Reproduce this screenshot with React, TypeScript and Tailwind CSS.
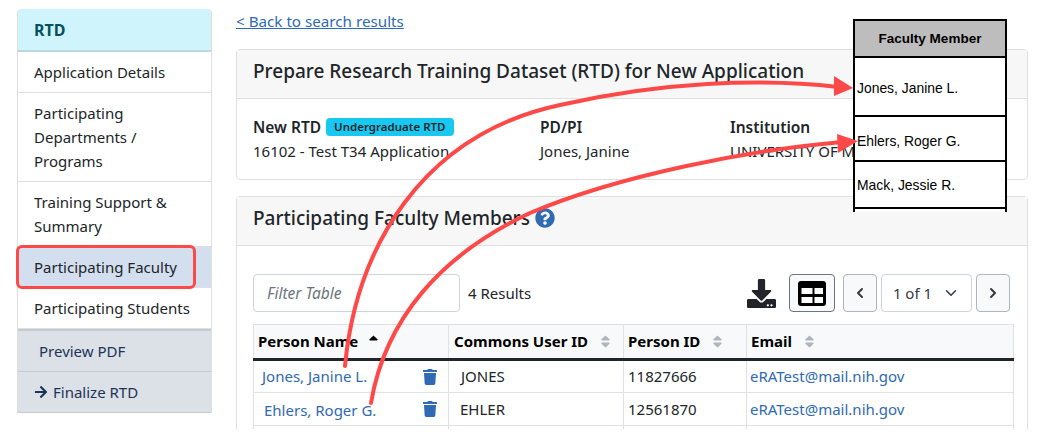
import React from "react";
import { ChevronDown, ChevronLeft, ChevronRight } from "lucide-react";
import { FaTrash, FaArrowRight, FaQuestionCircle, FaSortUp, FaSort, FaDownload } from "react-icons/fa";

const SideItem = ({ children, cls = "" }: { children: React.ReactNode; cls?: string }) => (
  <div className={`border-b border-[#dfdfdf] px-4 py-[7.5px] leading-6 ${cls}`}>{children}</div>
);

const Th = ({ w, children, sort }: { w: string; children: React.ReactNode; sort?: boolean }) => (
  <th className={`${w} border-r border-[#dee2e6] border-b-[3px] border-b-[#212529] text-left font-bold text-black`}>
    <span className="flex items-center gap-[10px]">
      {children}
      {sort && <FaSort className="text-[15px] text-[#adb5bd]" />}
    </span>
  </th>
);

const Row = ({ name, id, pid, nameCls, idCls, cellCls }: { name: string; id: string; pid: string; nameCls: string; idCls: string; cellCls: string }) => (
  <tr className="h-[33px] border-b border-[#dee2e6]">
    <td className="border-r border-l border-[#dee2e6] p-0">
      <div className="flex items-center justify-between pr-[10px] text-[#2f6ab3]">
        <span className={nameCls}>{name}</span>
        <FaTrash className="text-[16px]" />
      </div>
    </td>
    <td className={`border-r border-[#dee2e6] text-[#212529] ${idCls}`}>{id}</td>
    <td className={`border-r border-[#dee2e6] pl-[4px] text-[#212529] ${cellCls}`}>{pid}</td>
    <td className={`border-r border-[#dee2e6] pl-[3px] text-[#2f6ab3] ${cellCls}`}>eRATest@mail.nih.gov</td>
  </tr>
);

export default function App() {
  return (
    <div className="relative h-[437px] w-[1037px] overflow-hidden bg-white text-[15px] text-[#212529] [font-family:'Noto_Sans',sans-serif]">
      <div className="h-[429px] overflow-hidden">
        <div className="flex items-start gap-6 pl-[17px] pt-[9px]">
          <aside className="w-[195px] shrink-0 overflow-hidden rounded-t-[4px] border-x border-[#dfdfdf] text-[#212529]">
            <div className="h-[43px] border-b-2 border-[#b9d8e0] bg-[#cff4fc] px-[16px] pt-[9px] text-[16px] font-bold text-[#055160]">RTD</div>
            <SideItem cls="h-[41px]">Application Details</SideItem>
            <SideItem cls="h-[89px]">Participating Departments / Programs</SideItem>
            <SideItem cls="h-[65px]">Training Support &amp; Summary</SideItem>
            <SideItem cls="h-[41px] bg-[#d3dfee] border-[#c3ccd8]">Participating Faculty</SideItem>
            <SideItem cls="h-[41px]">Participating Students</SideItem>
            <div className="h-[2px] bg-[#c6cad0]" />
            <div className="h-[41px] border-b border-[#c6cad0] bg-[#dce0e7] pl-[21px] pt-[8px] leading-6 text-[#1c3556]">Preview PDF</div>
            <div className="flex h-[41px] items-center gap-[5px] border-b border-[#c6cad0] bg-[#dce0e7] pl-[16px] text-[#1c3556]">
              <FaArrowRight className="text-[14px]" />
              <span>Finalize RTD</span>
            </div>
          </aside>

          <main className="w-[792px] shrink-0">
            <a className="block h-[40px] text-[15.2px] leading-6 text-[#2f6ab3] underline">&lt; Back to search results</a>

            <section className="h-[131px] rounded-[4px] border border-[#dfdfdf]">
              <div className="flex h-[49px] items-center border-b border-[#dfdfdf] bg-[#f7f7f7] px-4 pb-[6px] text-[19px] font-medium">
                Prepare Research Training Dataset (RTD) for New Application
              </div>
              <div className="flex px-4 pt-[16px] leading-[24px]">
                <div className="w-[287px]">
                  <div className="flex items-center gap-[4px] text-[15.5px] font-semibold">
                    New RTD
                    <span className="ml-[1px] rounded-[4px] bg-[#19c8f0] px-2 py-[1px] text-[11.5px] leading-4 font-semibold text-[#212529]">Undergraduate RTD</span>
                  </div>
                  <div>16102 - Test T34 Application</div>
                </div>
                <div className="w-[190px]">
                  <div className="text-[15.5px] font-semibold">PD/PI</div>
                  <div>Jones, Janine</div>
                </div>
                <div>
                  <div className="text-[15.5px] font-semibold">Institution</div>
                  <div className="whitespace-nowrap">UNIVERSITY OF MARYLAND</div>
                </div>
              </div>
            </section>

            <section className="mt-[16px] rounded-[4px] border border-[#dfdfdf]">
              <div className="flex h-[49px] items-center gap-[5px] border-b border-[#dfdfdf] bg-[#f7f7f7] px-4 pb-[6px] text-[19px] font-medium">
                Participating Faculty Members
                <FaQuestionCircle className="text-[20px] text-[#2f6ab3]" />
              </div>
              <div className="px-4 pt-[28px]">
                <div className="flex h-[38px] items-center">
                  <div className="flex h-[38px] w-[207px] items-center rounded-[4px] border border-[#ced4da] pl-[13px] pt-[1px] text-[15.5px] italic text-[#6c757d]">Filter Table</div>
                  <span className="ml-2 pt-[1px]">4 Results</span>
                  <div className="ml-auto flex items-center pr-[1px]">
                    <FaDownload className="mr-[13px] text-[29px] text-[#212529]" />
                    <div className="mr-[8px] flex h-[38px] w-[46px] items-center justify-center rounded-[4px] border border-[#6c757d] bg-[#f8f9fa]">
                      <svg width="28" height="25" viewBox="0 0 28 25">
                        <rect width="28" height="25" rx="3" fill="#000" />
                        <rect x="3.5" y="7" width="11" height="6" fill="#fff" />
                        <rect x="16.5" y="7" width="8.5" height="6" fill="#fff" />
                        <rect x="3.5" y="16" width="11" height="6" fill="#fff" />
                        <rect x="16.5" y="16" width="8.5" height="6" fill="#fff" />
                      </svg>
                    </div>
                    <div className="flex h-[38px] w-[34px] items-center justify-center rounded-[4px] border border-[#adb5bd] bg-[#f8f9fa]">
                      <ChevronLeft size={16} strokeWidth={3} className="text-[#343a40]" />
                    </div>
                    <div className="mx-[4px] flex h-[38px] w-[91px] items-center justify-center gap-[10px] rounded-[4px] border border-[#ced4da] text-[#343a40]">
                      1 of 1 <ChevronDown size={18} />
                    </div>
                    <div className="flex h-[38px] w-[34px] items-center justify-center rounded-[4px] border border-[#adb5bd] bg-[#f8f9fa]">
                      <ChevronRight size={16} strokeWidth={3} className="text-[#343a40]" />
                    </div>
                  </div>
                </div>
                <table className="mt-[12px] w-[761px] table-fixed border-collapse">
                  <thead>
                    <tr className="h-[35px] border-t border-[#dee2e6] bg-[#f8f9fa]">
                      <Th w="w-[195px] border-l pl-[4px]">
                        <span className="flex items-center gap-[8px]">Person Name <FaSortUp className="text-[15px]" /></span>
                      </Th>
                      <Th w="w-[175px] pl-[5px]" sort>Commons User ID</Th>
                      <Th w="w-[123px] pl-[4px]" sort>Person ID</Th>
                      <Th w="pl-[4px]" sort>Email</Th>
                    </tr>
                  </thead>
                  <tbody>
                    <Row name="Jones, Janine L." id="JONES" pid="11827666" nameCls="pl-[8px]" idCls="pl-[12px]" cellCls="" />
                    <Row name="Ehlers, Roger G." id="EHLER" pid="12561870" nameCls="pl-[10px] pt-[2px]" idCls="pl-[11px]" cellCls="pt-[1px]" />
                    <tr className="h-[33px]"><td className="border-x border-[#dee2e6]" /><td className="border-r border-[#dee2e6]" /><td className="border-r border-[#dee2e6]" /><td className="border-r border-[#dee2e6]" /></tr>
                  </tbody>
                </table>
              </div>
            </section>
          </main>
        </div>
      </div>

      {/* Pasted spreadsheet excerpt over the page */}
      <div className="absolute left-[853px] top-[19px] h-[193px] w-[154px] border-x-2 border-t-2 border-black bg-white text-[13.9px] text-black [font-family:'Liberation_Sans',sans-serif]">
        <div className="flex h-[37px] items-center justify-center border-b-2 border-black bg-[#bdbdbd] pt-[1px] text-[13.5px] font-bold">Faculty Member</div>
        <div className="flex h-[59px] items-center border-b-2 border-black pl-[2px] pt-[4px]">Jones, Janine L.</div>
        <div className="flex h-[45px] items-center border-b-2 border-black pl-[2px] pt-[5px]">Ehlers, Roger G.</div>
        <div className="flex h-[47px] items-center border-b-2 border-black pl-[2px] pt-[2px]">Mack, Jessie R.</div>
      </div>

      {/* Highlight box around the active item */}
      <div className="absolute left-[16px] top-[245px] h-[44px] w-[180px] rounded-[6px] border-[3px] border-[#ff4848]" />

      {/* Annotation arrows */}
      <svg className="absolute left-0 top-0" width="1037" height="437" viewBox="0 0 1037 437" fill="none">
        <path d="M345 366 C356 250 420 135 560 105 C660 82 760 78 838 87" stroke="#ff4848" strokeWidth="4" strokeLinecap="round" />
        <path d="M834 76 L853 88 L834 96 Z" fill="#ff4848" />
        <path d="M371 403 C385 320 440 255 530 213 C620 175 750 150 842 142" stroke="#ff4848" strokeWidth="4" strokeLinecap="round" />
        <path d="M837 134 L858 141 L838 153 Z" fill="#ff4848" />
      </svg>
    </div>
  );
}
